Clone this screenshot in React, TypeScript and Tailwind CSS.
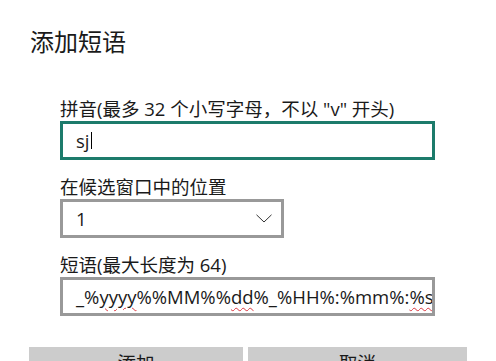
import React from 'react';

const font = { fontFamily: '"Open Sans", "Noto Sans CJK SC", sans-serif' };

const Squiggle = ({ children }: { children: React.ReactNode }) => (
  <span className="underline decoration-wavy decoration-[#d9363e] decoration-1 underline-offset-[3px]">{children}</span>
);

export default function App() {
  return (
    <div className="w-[496px] h-[361px] bg-white overflow-hidden text-[#1a1a1a]" style={font}>
      <div className="pl-[30px] pt-[26px]">
        <h1 className="text-[24px] leading-[32px] h-[32px]">添加短语</h1>
      </div>

      <div className="pl-[60px] mt-[39px]">
        <label className="block text-[18.5px] leading-[24px] h-[24px]">拼音(最多 32 个小写字母，不以 "v" 开头)</label>
        <div className="w-[375px] h-[39px] border-[3px] border-[#1c7b6b] flex items-center pl-[13px] text-[18.5px]">
          <span>sj</span>
          <span className="w-px h-[17px] bg-black ml-px" />
        </div>

        <label className="block mt-[15px] text-[18.5px] leading-[24px] h-[24px]">在候选窗口中的位置</label>
        <div className="w-[224px] h-[39px] border-[3px] border-[#999999] flex items-center justify-between pl-[13px] pr-[9px] text-[18.5px]">
          <span>1</span>
          <svg width="16" height="9" viewBox="0 0 16 9" fill="none" stroke="#333" strokeWidth="1">
            <path d="M0.5 0.8 L8 8 L15.5 0.8" />
          </svg>
        </div>

        <label className="block mt-[15px] text-[18.5px] leading-[24px] h-[24px]">短语(最大长度为 64)</label>
        <div className="w-[375px] h-[39px] border-[3px] border-[#999999] flex items-center pl-[13px] text-[18.5px] overflow-hidden whitespace-nowrap">
          <span>
            _%<Squiggle>yyyy</Squiggle>%%MM%%<Squiggle>dd</Squiggle>%_%HH%:%mm%:<Squiggle>%ss</Squiggle>
          </span>
        </div>
      </div>

      <div className="flex gap-[5px] pl-[29px] mt-[31px]">
        <button className="w-[214px] h-[32px] bg-[#cccccc] text-[18.5px] leading-[32px]">添加</button>
        <button className="w-[219px] h-[32px] bg-[#cccccc] text-[18.5px] leading-[32px]">取消</button>
      </div>
    </div>
  );
}
